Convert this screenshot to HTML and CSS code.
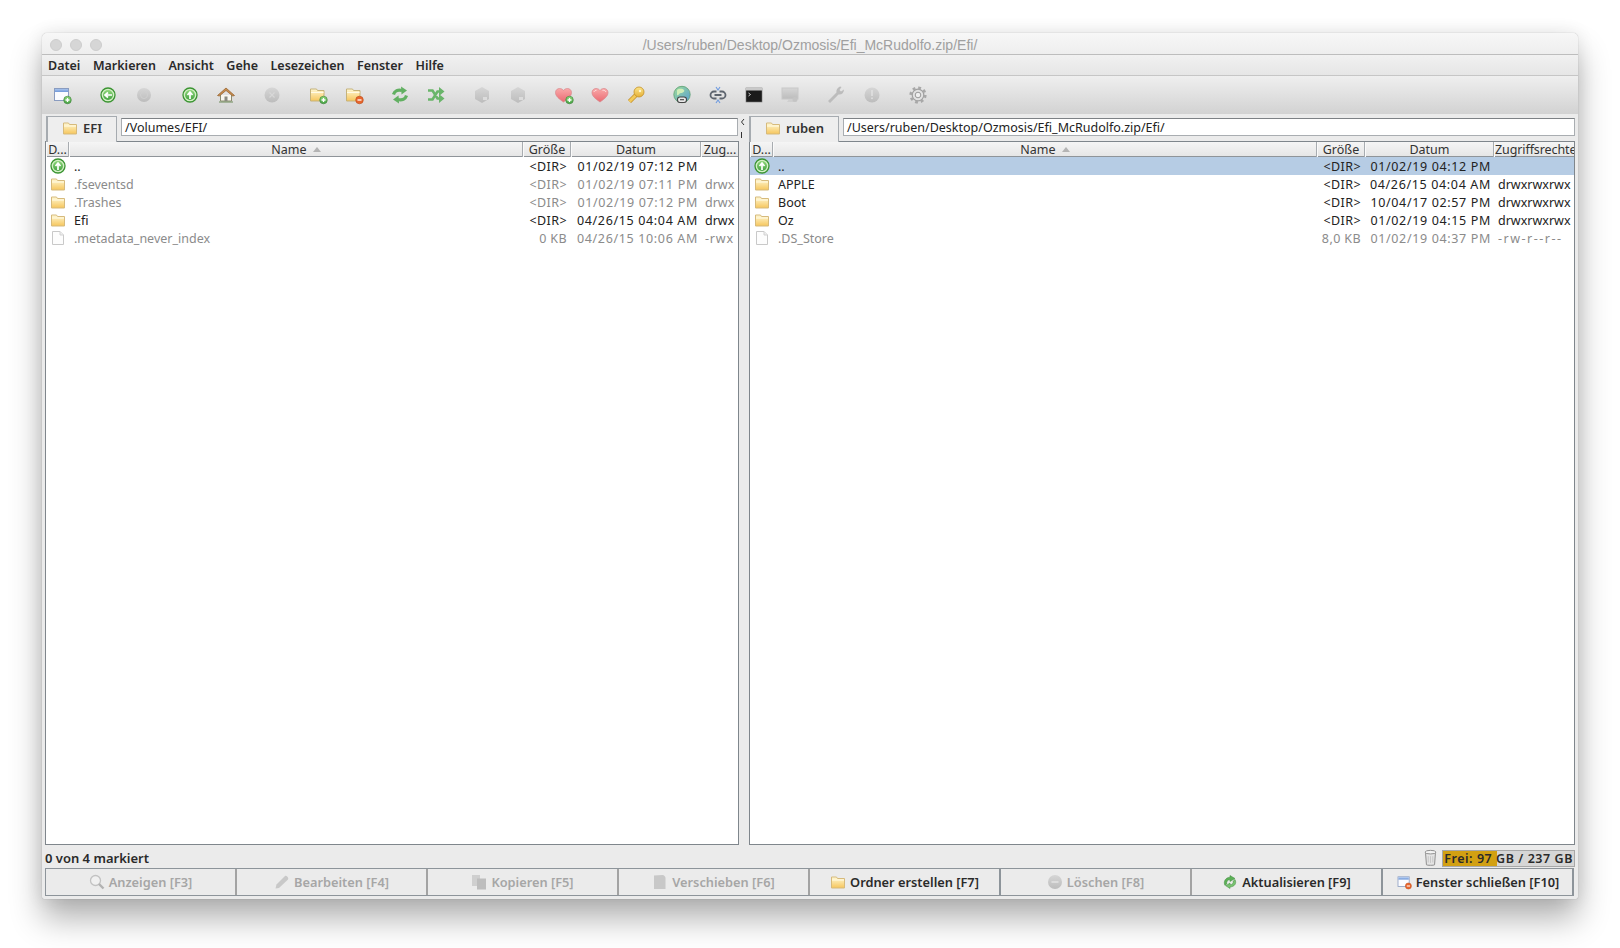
FILE: index.html
```html
<!DOCTYPE html>
<html lang="de">
<head>
<meta charset="utf-8">
<title>muCommander</title>
<link rel="stylesheet" href="styles.css">
</head>
<body>
<svg class="defs" xmlns="http://www.w3.org/2000/svg">
  <defs>
    <linearGradient id="gFolder" x1="0" y1="0" x2="0" y2="1"><stop offset="0" stop-color="#fff8d4"/><stop offset="1" stop-color="#f6c65c"/></linearGradient>
    <linearGradient id="gGreen" x1="0" y1="0" x2="0" y2="1"><stop offset="0" stop-color="#8ed67a"/><stop offset="1" stop-color="#46a344"/></linearGradient>
    <linearGradient id="gGray" x1="0" y1="0" x2="0" y2="1"><stop offset="0" stop-color="#d6d6d6"/><stop offset="1" stop-color="#bcbcbc"/></linearGradient>
    <linearGradient id="gHeart" x1="0" y1="0" x2="0" y2="1"><stop offset="0" stop-color="#f9a9a9"/><stop offset="1" stop-color="#ea6a72"/></linearGradient>
    <linearGradient id="gKey" x1="0" y1="0" x2="0" y2="1"><stop offset="0" stop-color="#fbe58a"/><stop offset="1" stop-color="#e6b038"/></linearGradient>
    <linearGradient id="gTitle" x1="0" y1="0" x2="0" y2="1"><stop offset="0" stop-color="#a8c4ee"/><stop offset="1" stop-color="#7098d8"/></linearGradient>
    <linearGradient id="gGlobe" x1="0" y1="0" x2="1" y2="1"><stop offset="0" stop-color="#9ddc98"/><stop offset="1" stop-color="#5a9fd4"/></linearGradient>
  </defs>
  <symbol id="i-folder" viewBox="0 0 16 16"><path d="M1.500 3h5l1 1.500h7v9.500h-13z" fill="url(#gFolder)" stroke="#d6ba7c"/><path d="M2 6h12" stroke="#fffbe6"/></symbol>
  <symbol id="i-file" viewBox="0 0 16 16"><path d="M2.500 1.500h7.500l3.500 3.500v9.500h-11z" fill="#fdfdfd" stroke="#c9c9c9"/><path d="M10 1.500v3.500h3.500" fill="#eee" stroke="#d2d2d2"/></symbol>
  <symbol id="i-up" viewBox="0 0 16 16"><circle cx="8" cy="8" r="7" fill="#d4f0c6" stroke="#3a9431" stroke-width="1.300"/><circle cx="8" cy="8" r="5" fill="url(#gGreen)"/><path d="M8 12V6M5.500 8 8 5l2.500 3" fill="none" stroke="#fff" stroke-width="1.700"/></symbol>
  <symbol id="i-back" viewBox="0 0 16 16"><circle cx="8" cy="8" r="7" fill="#d4f0c6" stroke="#3a9431" stroke-width="1.300"/><circle cx="8" cy="8" r="5" fill="url(#gGreen)"/><path d="M12 8H6M8 5.500 5 8l3 2.500" fill="none" stroke="#fff" stroke-width="1.700"/></symbol>
  <symbol id="i-round-gray" viewBox="0 0 16 16"><circle cx="8" cy="8" r="7" fill="url(#gGray)"/><circle cx="8" cy="8" r="3.500" fill="none" stroke="#d0d0d0"/></symbol>
  <symbol id="i-new" viewBox="0 0 20 20"><rect x="2.500" y="3.500" width="14" height="12" fill="#fbfcff" stroke="#8a9cc0"/><rect x="3" y="4" width="13" height="3" fill="url(#gTitle)"/><circle cx="15.500" cy="15" r="3.800" fill="url(#gGreen)" stroke="#3a7f38" stroke-width=".6"/><path d="M13.500 15h4M15.500 13v4" stroke="#fff" stroke-width="1.300"/></symbol>
  <symbol id="i-close" viewBox="0 0 20 20"><rect x="2.500" y="3.500" width="14" height="12" fill="#fbfcff" stroke="#8a9cc0"/><rect x="3" y="4" width="13" height="3" fill="url(#gTitle)"/><circle cx="15.500" cy="15" r="3.800" fill="#e8662e" stroke="#b94a18" stroke-width=".6"/><path d="M13.500 15h4" stroke="#fff" stroke-width="1.300"/></symbol>
  <symbol id="i-home" viewBox="0 0 20 20"><path d="M4.500 10v6h11v-6" fill="#f8f6ee" stroke="#8c8c70"/><rect x="8.500" y="11.500" width="3" height="4.500" fill="#8a8a80"/><path d="M1.500 10.500 10 3l8.500 7.500-1.800.5L10 5.500 3.300 11z" fill="#c98d4c" stroke="#8f5c28" stroke-width=".7"/><path d="M3 17h14" stroke="#6f8c5a"/></symbol>
  <symbol id="i-stop" viewBox="0 0 20 20"><circle cx="10" cy="10" r="7.500" fill="url(#gGray)"/><path d="M7.500 7.500l5 5M12.500 7.500l-5 5" stroke="#d8d8d8" stroke-width="1.200"/></symbol>
  <symbol id="i-folder-add" viewBox="0 0 20 20"><path d="M2.500 4h6l1 1.500h6.500v10.500h-13.500z" fill="url(#gFolder)" stroke="#c5b27a"/><path d="M3 7.500h12.500" stroke="#fffbe6"/><circle cx="15.500" cy="15" r="3.800" fill="url(#gGreen)" stroke="#3a7f38" stroke-width=".6"/><path d="M13.500 15h4M15.500 13v4" stroke="#fff" stroke-width="1.300"/></symbol>
  <symbol id="i-folder-del" viewBox="0 0 20 20"><path d="M2.500 4h6l1 1.500h6.500v10.500h-13.500z" fill="url(#gFolder)" stroke="#c5b27a"/><path d="M3 7.500h12.500" stroke="#fffbe6"/><circle cx="15.500" cy="15" r="3.800" fill="#e8662e" stroke="#b94a18" stroke-width=".6"/><path d="M13.500 15h4" stroke="#fff" stroke-width="1.300"/></symbol>
  <symbol id="i-sync" viewBox="0 0 20 20"><path d="M3.500 9.500C4.500 6 8 4.500 12 5.500" fill="none" stroke="#62b062" stroke-width="3.200"/><path d="M11 1.500l6 4-5.500 4z" fill="#62b062"/><path d="M16.500 10.500C15.500 14 12 15.500 8 14.500" fill="none" stroke="#62b062" stroke-width="3.200"/><path d="M9 18.500l-6-4 5.500-4z" fill="#62b062"/></symbol>
  <symbol id="i-swap" viewBox="0 0 20 20"><path d="M2 5.500h4.500l5 8H14M2 14.500h4.500l5-8H14" fill="none" stroke="#69b56a" stroke-width="2.600"/><path d="M13 2 18.500 6.500 13 11zM13 9l5.500 4.500L13 18z" fill="#69b56a"/></symbol>
  <symbol id="i-hex" viewBox="0 0 20 20"><path d="M10 2l7 4v8l-7 4-7-4V6z" fill="url(#gGray)"/><rect x="11" y="12" width="4" height="3" fill="#dcdcdc"/></symbol>
  <symbol id="i-heart" viewBox="0 0 20 20"><path d="M10 17C5 13.500 2 11 2 7.500 2 5 4 3.500 6 3.500c1.800 0 3.200.8 4 2 .8-1.200 2.200-2 4-2 2 0 4 1.500 4 4 0 3.500-3 6-8 9.500z" fill="url(#gHeart)" stroke="#d9868b" stroke-width=".7"/><path d="M4 7c.3-1 1.200-1.700 2.500-1.700M12.500 5.400c1.500-.4 3 .3 3.500 1.600" fill="none" stroke="#fff" stroke-opacity=".65"/></symbol>
  <symbol id="i-heart-add" viewBox="0 0 20 20"><path d="M9.500 17C4.500 13.500 1.500 11 1.500 7.500c0-2.500 2-4 4-4 1.800 0 3.200.8 4 2 .8-1.200 2.200-2 4-2 2 0 4 1.500 4 4 0 3.500-3 6-8 9.500z" fill="url(#gHeart)" stroke="#d9868b" stroke-width=".7"/><circle cx="15.500" cy="15" r="3.800" fill="url(#gGreen)" stroke="#3a7f38" stroke-width=".6"/><path d="M13.500 15h4M15.500 13v4" stroke="#fff" stroke-width="1.300"/></symbol>
  <symbol id="i-key" viewBox="0 0 20 20"><path d="M10 10 3.500 16.500" stroke="#c48f24" stroke-width="4.400"/><path d="M10 10 3.500 16.500" stroke="#f2c95a" stroke-width="3"/><circle cx="13" cy="7" r="5" fill="url(#gKey)" stroke="#c48f24" stroke-width=".8"/><circle cx="14" cy="6" r="1.200" fill="#fff7cf"/></symbol>
  <symbol id="i-globe" viewBox="0 0 20 20"><circle cx="10" cy="9.500" r="8.200" fill="url(#gGlobe)" stroke="#5aa070" stroke-width=".8"/><path d="M5 5c3-2 6-1 7 0s-1 3-3 3-2 3-4 2z" fill="#d0eeb8"/><rect x="5.500" y="12" width="9" height="5.500" rx="2.500" fill="#e8e8e8" stroke="#444" stroke-width="1.100"/><path d="M8 14.700h4" stroke="#444" stroke-width="1.100"/></symbol>
  <symbol id="i-link" viewBox="0 0 20 20"><path d="M8.500 6.500H6a3.500 3.500 0 0 0 0 7h2.500M11.500 6.500H14a3.500 3.500 0 0 1 0 7h-2.500M6.500 10h7" fill="none" stroke="#5d646e" stroke-width="1.800"/><path d="M8 2l2 3 2-3M8 18l2-3 2 3" fill="none" stroke="#6f9be0" stroke-width="1.100"/></symbol>
  <symbol id="i-term" viewBox="0 0 20 20"><rect x="2" y="3" width="16" height="14" fill="#1b1b1b" stroke="#777" stroke-width=".6"/><rect x="2" y="3" width="16" height="2.500" fill="#c9c9c9"/><path d="M4.500 8l2 1.500-2 1.500" fill="none" stroke="#eee" stroke-width=".8"/></symbol>
  <symbol id="i-monitor" viewBox="0 0 20 20"><rect x="2" y="3" width="16" height="11" fill="url(#gGray)" stroke="#c8c8c8"/><path d="M7 17h8l-3-3H9z" fill="#cfcfcf"/><circle cx="15" cy="14.500" r="2.500" fill="#c4c4c4"/></symbol>
  <symbol id="i-wrench" viewBox="0 0 20 20"><path d="M4 18 2 16 10.500 7.500C10 5 11 3 14 1.500l1.500.5-2 3 1.500 1.500 3-2c0 3.500-2.500 5.500-5.500 5z" fill="#bcbcbc"/></symbol>
  <symbol id="i-info" viewBox="0 0 20 20"><circle cx="10" cy="10" r="7.500" fill="url(#gGray)"/><rect x="9.200" y="5" width="1.600" height="6" fill="#e0e0e0"/><rect x="9.200" y="12.500" width="1.600" height="1.600" fill="#e0e0e0"/></symbol>
  <symbol id="i-gear" viewBox="0 0 20 20"><circle cx="10" cy="10" r="5.800" fill="#e2e2e2" stroke="#a0a0a0" stroke-width="1.200"/><circle cx="10" cy="10" r="7.200" fill="none" stroke="#a8a8a8" stroke-width="2.800" stroke-dasharray="2.800 2.850"/><circle cx="10" cy="10" r="2.800" fill="#efefef" stroke="#9a9a9a"/></symbol>
  <symbol id="i-trash" viewBox="0 0 16 20"><path d="M2.500 4.500l1 13c0 .8 9 .8 9 0l1-13" fill="#e4e4e4" stroke="#858585"/><ellipse cx="8" cy="3.500" rx="6" ry="2" fill="#f3f3f3" stroke="#858585"/><path d="M5.500 8v7M8 8v7.500M10.500 8v7" stroke="#c4c4c4"/></symbol>
  <symbol id="i-search" viewBox="0 0 16 16"><circle cx="6.500" cy="6.500" r="5" fill="#f0f0f0" stroke="#c2c2c2" stroke-width="1.300"/><path d="M10 10l4.500 4.500" stroke="#b2b2b2" stroke-width="2.400"/></symbol>
  <symbol id="i-pencil" viewBox="0 0 16 16"><path d="M1.500 14.500 2.500 10.500 11 2c1-.8 2.500.6 3 1.500s.2 1.700-.5 2.500L5 14z" fill="#c8c8c8"/></symbol>
  <symbol id="i-copy" viewBox="0 0 16 16"><rect x="1" y="1" width="8" height="11" fill="#cfcfcf"/><rect x="6" y="4.500" width="9" height="11" fill="#bdbdbd"/></symbol>
  <symbol id="i-doc" viewBox="0 0 16 16"><path d="M2 1.500 10.500 1c1.500 0 3 1.500 3 3v11h-11.500z" fill="#c8c8c8"/></symbol>
  <symbol id="i-del" viewBox="0 0 16 16"><circle cx="8" cy="8" r="7" fill="url(#gGray)"/><path d="M4.500 8h7" stroke="#e3e3e3" stroke-width="1.500"/></symbol>
  <symbol id="i-refresh" viewBox="0 0 16 16"><path d="M8 1.500 13 4.500 8 7.500V5.800C5.500 5.800 4.200 7.500 4.800 10L3 11.500C1 7.500 3.500 3.500 8 3.200z" fill="#5bb056" stroke="#3f8a3c" stroke-width=".5"/><path d="M8 14.500 3.800 11.800 8 9v1.700c2.300 0 3.500-1.500 3.200-3.700L13 5.500c2 4-.5 7.200-5 7.500z" fill="#78c270" stroke="#3f8a3c" stroke-width=".5"/></symbol>
</svg>

<div class="window">
  <header class="titlebar">
    <div class="lights"><span class="light"></span><span class="light"></span><span class="light"></span></div>
    <div class="title">/Users/ruben/Desktop/Ozmosis/Efi_McRudolfo.zip/Efi/</div>
  </header>
  <nav class="menubar">
    <span>Datei</span><span>Markieren</span><span>Ansicht</span><span>Gehe</span><span>Lesezeichen</span><span>Fenster</span><span>Hilfe</span>
  </nav>
  <div class="toolbar">
    <div class="tgroup"><svg class="ticon"><use href="#i-new"/></svg></div>
    <div class="tgroup"><svg class="ticon small"><use href="#i-back"/></svg><svg class="ticon small"><use href="#i-round-gray"/></svg></div>
    <div class="tgroup"><svg class="ticon small"><use href="#i-up"/></svg><svg class="ticon"><use href="#i-home"/></svg></div>
    <div class="tgroup"><svg class="ticon"><use href="#i-stop"/></svg></div>
    <div class="tgroup"><svg class="ticon"><use href="#i-folder-add"/></svg><svg class="ticon"><use href="#i-folder-del"/></svg></div>
    <div class="tgroup"><svg class="ticon"><use href="#i-sync"/></svg><svg class="ticon"><use href="#i-swap"/></svg></div>
    <div class="tgroup"><svg class="ticon"><use href="#i-hex"/></svg><svg class="ticon"><use href="#i-hex"/></svg></div>
    <div class="tgroup"><svg class="ticon"><use href="#i-heart-add"/></svg><svg class="ticon"><use href="#i-heart"/></svg><svg class="ticon"><use href="#i-key"/></svg></div>
    <div class="tgroup"><svg class="ticon"><use href="#i-globe"/></svg><svg class="ticon"><use href="#i-link"/></svg><svg class="ticon"><use href="#i-term"/></svg><svg class="ticon"><use href="#i-monitor"/></svg></div>
    <div class="tgroup"><svg class="ticon"><use href="#i-wrench"/></svg><svg class="ticon"><use href="#i-info"/></svg></div>
    <div class="tgroup"><svg class="ticon"><use href="#i-gear"/></svg></div>
  </div>

  <main class="panes">
    <section class="pane pane-left">
      <div class="location">
        <div class="tab tab-left"><svg class="ficon"><use href="#i-folder"/></svg><b>EFI</b></div>
        <div class="path">/Volumes/EFI/</div>
      </div>
      <div class="list">
        <div class="row head">
          <div class="hcell">D...</div><div class="hcell">Name <i class="sort"></i></div><div class="hcell">Größe</div><div class="hcell">Datum</div><div class="hcell">Zug...</div>
        </div>
        <div class="row"><div class="c-icon"><svg class="ficon"><use href="#i-up"/></svg></div><div class="c-name">..</div><div class="c-size">&lt;DIR&gt;</div><div class="c-date">01/02/19 07:12 PM</div><div class="c-perm"></div></div>
        <div class="row dim"><div class="c-icon"><svg class="ficon"><use href="#i-folder"/></svg></div><div class="c-name">.fseventsd</div><div class="c-size">&lt;DIR&gt;</div><div class="c-date">01/02/19 07:11 PM</div><div class="c-perm">drwx</div></div>
        <div class="row dim"><div class="c-icon"><svg class="ficon"><use href="#i-folder"/></svg></div><div class="c-name">.Trashes</div><div class="c-size">&lt;DIR&gt;</div><div class="c-date">01/02/19 07:12 PM</div><div class="c-perm">drwx</div></div>
        <div class="row"><div class="c-icon"><svg class="ficon"><use href="#i-folder"/></svg></div><div class="c-name">Efi</div><div class="c-size">&lt;DIR&gt;</div><div class="c-date">04/26/15 04:04 AM</div><div class="c-perm">drwx</div></div>
        <div class="row dim"><div class="c-icon"><svg class="ficon"><use href="#i-file"/></svg></div><div class="c-name">.metadata_never_index</div><div class="c-size">0 KB</div><div class="c-date">04/26/15 10:06 AM</div><div class="c-perm wide">-rwx</div></div>
      </div>
      <svg class="split-mark" viewBox="0 0 6 22"><path d="M4 1 1.500 4 4 7M1.500 14v6" fill="none" stroke="#333"/></svg>
    </section>

    <section class="pane pane-right">
      <div class="location">
        <div class="tab tab-right"><svg class="ficon"><use href="#i-folder"/></svg><b>ruben</b></div>
        <div class="path">/Users/ruben/Desktop/Ozmosis/Efi_McRudolfo.zip/Efi/</div>
      </div>
      <div class="list">
        <div class="row head">
          <div class="hcell">D...</div><div class="hcell">Name <i class="sort"></i></div><div class="hcell">Größe</div><div class="hcell">Datum</div><div class="hcell tight">Zugriffsrechte</div>
        </div>
        <div class="row selected"><div class="c-icon"><svg class="ficon"><use href="#i-up"/></svg></div><div class="c-name">..</div><div class="c-size">&lt;DIR&gt;</div><div class="c-date">01/02/19 04:12 PM</div><div class="c-perm"></div></div>
        <div class="row"><div class="c-icon"><svg class="ficon"><use href="#i-folder"/></svg></div><div class="c-name">APPLE</div><div class="c-size">&lt;DIR&gt;</div><div class="c-date">04/26/15 04:04 AM</div><div class="c-perm">drwxrwxrwx</div></div>
        <div class="row"><div class="c-icon"><svg class="ficon"><use href="#i-folder"/></svg></div><div class="c-name">Boot</div><div class="c-size">&lt;DIR&gt;</div><div class="c-date">10/04/17 02:57 PM</div><div class="c-perm">drwxrwxrwx</div></div>
        <div class="row"><div class="c-icon"><svg class="ficon"><use href="#i-folder"/></svg></div><div class="c-name">Oz</div><div class="c-size">&lt;DIR&gt;</div><div class="c-date">01/02/19 04:15 PM</div><div class="c-perm">drwxrwxrwx</div></div>
        <div class="row dim"><div class="c-icon"><svg class="ficon"><use href="#i-file"/></svg></div><div class="c-name">.DS_Store</div><div class="c-size">8,0 KB</div><div class="c-date">01/02/19 04:37 PM</div><div class="c-perm wide">-rw-r--r--</div></div>
      </div>
    </section>
  </main>

  <div class="status">
    <span class="count">0 von 4 markiert</span>
    <svg class="trash"><use href="#i-trash"/></svg>
    <div class="free"><div class="free-fill" style="width:41.500%"></div><span class="free-text">Frei: 97 GB / 237 GB</span></div>
  </div>

  <div class="buttons">
    <div class="btn off"><svg class="bicon"><use href="#i-search"/></svg>Anzeigen [F3]</div>
    <div class="btn off"><svg class="bicon"><use href="#i-pencil"/></svg>Bearbeiten [F4]</div>
    <div class="btn off"><svg class="bicon"><use href="#i-copy"/></svg>Kopieren [F5]</div>
    <div class="btn off"><svg class="bicon"><use href="#i-doc"/></svg>Verschieben [F6]</div>
    <div class="btn"><svg class="bicon"><use href="#i-folder"/></svg>Ordner erstellen [F7]</div>
    <div class="btn off"><svg class="bicon"><use href="#i-del"/></svg>Löschen [F8]</div>
    <div class="btn"><svg class="bicon"><use href="#i-refresh"/></svg>Aktualisieren [F9]</div>
    <div class="btn"><svg class="bicon"><use href="#i-close"/></svg>Fenster schließen [F10]</div>
  </div>
</div>
</body>
</html>
```
FILE: styles.css
```css
* { box-sizing: border-box; }
html, body { height: 100%; }
body {
  margin: 0;
  padding: 33px 42px 0;
  background: #fff;
  font-family: "Noto Sans", "DejaVu Sans", sans-serif;
  font-size: 12.500px;
  color: #222;
  overflow: hidden;
}
.defs { position: absolute; width: 0; height: 0; }

.window {
  width: 1536px;
  height: 866px;
  background: #ebebeb;
  border-radius: 5px 5px 2px 2px;
  box-shadow: 0 20px 32px rgba(0,0,0,.30), 0 0 18px rgba(0,0,0,.09), 0 0 1px rgba(0,0,0,.35);
  display: flex;
  flex-direction: column;
}

.titlebar {
  height: 22px;
  flex: none;
  display: flex;
  align-items: center;
  justify-content: center;
  padding-top: 2px;
  position: relative;
  background: linear-gradient(#f7f7f7, #eeeeee);
  border-bottom: 1px solid #bdbdbd;
  border-radius: 5px 5px 0 0;
}
.lights {
  position: absolute;
  left: 8px;
  top: 6px;
  display: flex;
  gap: 8px;
}
.light { width: 12px; height: 12px; border-radius: 50%; background: #d6d6d6; border: 1px solid #cdcdcd; }
.title {
  font-family: "Liberation Sans", Arial, sans-serif;
  font-size: 14px;
  color: #a0a0a0;
}

.menubar {
  height: 21px;
  flex: none;
  display: flex;
  align-items: center;
  gap: 12.500px;
  padding-left: 6px;
  background: linear-gradient(#f1f1f1, #e6e6e6);
  border-bottom: 1px solid #c6c6c6;
  font-weight: 600;
  font-size: 12.500px;
  color: #2a2a2a;
}

.toolbar {
  height: 38px;
  flex: none;
  display: flex;
  align-items: center;
  gap: 10px;
  padding: 0 0 1px 2px;
  background: linear-gradient(#efefef, #d2d2d2);
}
.tgroup { display: flex; align-items: center; }
.ticon { width: 36px; height: 20px; }
.ticon.small { height: 16px; }

.panes {
  flex: none;
  display: grid;
  grid-template-columns: 694px 826px;
  gap: 10px;
  padding: 2px 3px 0;
}
.pane { display: flex; flex-direction: column; position: relative; }
.location { display: flex; height: 25px; }
.pane-left .location { padding-left: 1px; }
.tab {
  display: flex;
  align-items: center;
  justify-content: center;
  gap: 5px;
  height: 26px;
  padding-bottom: 3px;
  background: #eeeeee;
  border: 1px solid #a6abb0;
  border-bottom: 0;
  border-left-width: 2px;
  position: relative;
  font-size: 13px;
  color: #333;
}
.tab b { font-weight: 600; }
.tab-left { width: 71px; }
.tab-right { width: 90px; }
.path {
  flex: 1;
  height: 18px;
  margin: 2px 1px 0 4px;
  background: #fff;
  border: 1px solid #a9adb1;
  border-top: 1px solid #7d8185;
  padding-left: 3px;
  line-height: 17px;
  font-size: 12.500px;
  color: #222;
  white-space: nowrap;
}
.pane-right .path { margin-right: 0; }
.split-mark { position: absolute; right: -7px; top: 2px; width: 6px; height: 22px; }

.list {
  height: 704px;
  background: #fff;
  border: 1px solid #7f868c;
  overflow: hidden;
}
.row { display: grid; grid-auto-rows: 18px; height: 18px; line-height: 20px; white-space: nowrap; }
.pane-left .row { grid-template-columns: 23px 454px 48px 130px 37px; }
.pane-right .row { grid-template-columns: 23px 544px 48px 129px 80px; }

.row.head {
  grid-auto-rows: 15px;
  height: 15px;
  line-height: 15px;
  border-bottom: 1px solid #8f9499;
  background: linear-gradient(#f5f5f5, #e6e6e6);
}
.hcell {
  text-align: center;
  border-right: 1px solid #a8acb0;
  border-left: 1px solid #fafafa;
  color: #333;
}
.hcell:last-child { border-right: 0; }
.hcell.tight { letter-spacing: -.1px; }
.sort {
  display: inline-block;
  margin-left: 3px;
  vertical-align: 2px;
  border-left: 4px solid transparent;
  border-right: 4px solid transparent;
  border-bottom: 5px solid #b4b4b4;
}

.c-icon { display: flex; align-items: center; justify-content: center; }
.ficon { width: 16px; height: 16px; flex: none; }
.c-name { padding-left: 5px; }
.c-size { text-align: right; padding-right: 4px; letter-spacing: .4px; }
.c-date { text-align: right; padding-right: 3px; letter-spacing: .65px; }
.c-perm { padding-left: 4px; }
.c-perm.wide { letter-spacing: 1.500px; }
.pane-left .c-perm.wide { letter-spacing: .8px; }
.dim { color: #8b8b8b; }
.selected { background: #b6cce4; }

.status {
  flex: none;
  height: 20px;
  margin-top: 3px;
  padding: 0 3px 0 3px;
  display: flex;
  align-items: center;
}
.count { font-weight: 600; font-size: 13px; color: #2a2a2a; flex: 1; }
.trash { width: 15px; height: 18px; margin-right: 4px; }
.free {
  position: relative;
  width: 133px;
  height: 17px;
  background: #d6d6d6;
  border: 1px solid #a8a8a8;
  text-align: right;
}
.free-fill { position: absolute; left: 0; top: 0; bottom: 0; background: #d2a012; }
.free-text { position: relative; font-weight: 600; font-size: 12.500px; line-height: 15px; display: block; padding-right: 1px; letter-spacing: .55px; color: #2a2a2a; }

.buttons {
  flex: none;
  display: grid;
  grid-template-columns: repeat(8, 191px);
  height: 28px;
  margin-left: 3px;
  border: 1px solid #8d949a;
  border-width: 1px 0 1px 1px;
  width: 1529px;
}
.btn {
  display: flex;
  align-items: center;
  justify-content: center;
  gap: 4px;
  font-weight: 600;
  font-size: 12.800px;
  color: #2a2a2a;
  border-right: 2px solid #8d949a;
  white-space: nowrap;
}
.btn.off { color: #a6a6a6; border-right-color: #a3a3a3; }
.bicon { width: 16px; height: 16px; flex: none; }
```
